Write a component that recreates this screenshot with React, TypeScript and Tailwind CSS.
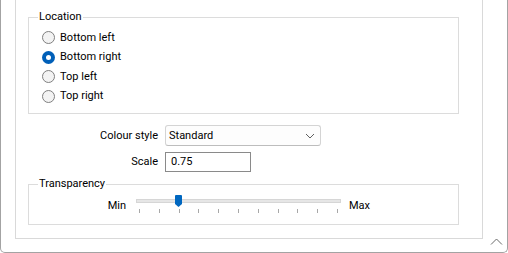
import React from "react";

const font = { fontFamily: 'Roboto, "Noto Sans", sans-serif' };

function Radio({ label, checked }: { label: string; checked?: boolean }) {
  return (
    <div className="flex items-center h-[19.5px]">
      {checked ? (
        <div className="w-[13px] h-[13px] rounded-full bg-[#005fb8] flex items-center justify-center">
          <div className="w-[5px] h-[5px] rounded-full bg-white" />
        </div>
      ) : (
        <div className="w-[13px] h-[13px] rounded-full border border-[#7f7f7f] bg-[#f3f3f3]" />
      )}
      <span className="ml-[5px] text-[11px] leading-[16px] text-black">{label}</span>
    </div>
  );
}

export default function App() {
  const ticks = Array.from({ length: 11 }, (_, i) => i);
  return (
    <div className="w-[508px] h-[253px] bg-white overflow-hidden" style={font}>
      <div className="relative w-[508px] h-[253px] border-l border-r border-b border-[#a3a3a3] rounded-b-[5px] flex">
        <div className="ml-[14px] w-[468px] h-[239px] border-l border-r border-b border-[#d9d9d9] flex flex-col">
          {/* Location */}
          <div className="relative ml-[12px] mt-[17px] w-[431px] h-[97px] border border-[#dcdcdc] pl-[13px] pt-[10px]">
            <span className="absolute left-[9px] top-[-9px] bg-white px-[1px] text-[11px] leading-[16px] text-black">
              Location
            </span>
            <Radio label="Bottom left" />
            <Radio label="Bottom right" checked />
            <Radio label="Top left" />
            <Radio label="Top right" />
          </div>

          {/* Colour style */}
          <div className="flex items-center mt-[11px] h-[21px]">
            <span className="w-[142px] text-right text-[11px] leading-[16px] text-black">Colour style</span>
            <div className="ml-[7px] w-[156px] h-[21px] border border-[#d4d4d4] border-b-[#bdbdbd] rounded-[3px] bg-[#fdfdfd] flex items-center justify-between pl-[3px] pr-[5px]">
              <span className="text-[11px] leading-[16px] text-black">Standard</span>
              <svg width="10" height="6" viewBox="0 0 10 6">
                <path d="M1 1 L5 5 L9 1" fill="none" stroke="#606060" strokeWidth="1" />
              </svg>
            </div>
          </div>

          {/* Scale */}
          <div className="flex items-center mt-[6px] h-[20px]">
            <span className="w-[142px] text-right text-[11px] leading-[16px] text-black">Scale</span>
            <div className="ml-[7px] w-[86px] h-[20px] border border-[#8a8a8a] bg-white flex items-center pl-[5px]">
              <span className="text-[11px] leading-[16px] text-black">0.75</span>
            </div>
          </div>

          {/* Transparency */}
          <div className="relative ml-[12px] mt-[12px] w-[431px] h-[41px] border border-[#dcdcdc]">
            <span className="absolute left-[9px] top-[-9px] bg-white px-[1px] text-[11px] leading-[16px] text-black">
              Transparency
            </span>
            <div className="flex items-start mt-[12px]">
              <span className="w-[97px] text-right text-[11px] leading-[16px] text-black mt-[1px]">Min</span>
              <div className="relative ml-[10px] w-[205px] h-[20px]">
                <div className="absolute left-0 right-0 top-[2px] h-[4px] bg-[#e6e6e6] border border-[#d6d6d6]" />
                <svg className="absolute left-[39px] top-[-2px]" width="7" height="12" viewBox="0 0 7 12">
                  <path d="M1 0 H6 Q7 0 7 1 V9 L3.5 12 L0 9 V1 Q0 0 1 0 Z" fill="#0067c0" />
                </svg>
                <div className="absolute left-[3px] top-[12px] flex gap-[18.8px]">
                  {ticks.map((t) => (
                    <div key={t} className="w-px h-[4px] bg-[#a8a8a8]" />
                  ))}
                </div>
              </div>
              <span className="ml-[8px] text-[11px] leading-[16px] text-black mt-[1px]">Max</span>
            </div>
          </div>
        </div>

        <svg className="absolute right-[4px] bottom-[7px]" width="13" height="7" viewBox="0 0 13 7">
          <path d="M1 6.5 L6.5 1 L12 6.5" fill="none" stroke="#6b6b6b" strokeWidth="1" />
        </svg>
      </div>
    </div>
  );
}
